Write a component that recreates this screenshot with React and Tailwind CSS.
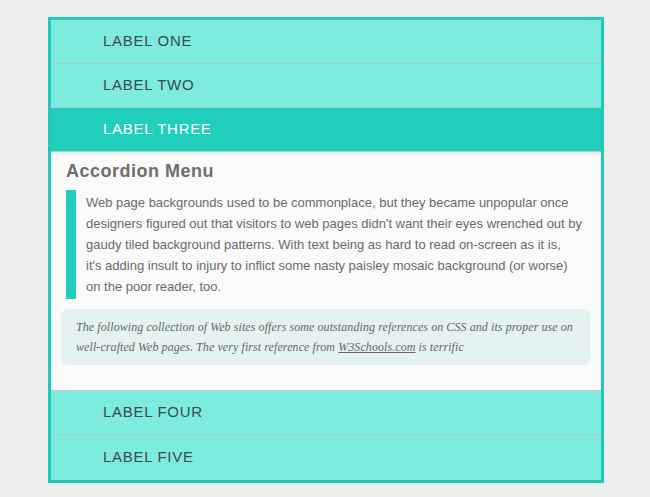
import React from 'react';

const LABELS_TOP = ['Label One', 'Label Two'];
const LABELS_BOTTOM = ['Label Four', 'Label Five'];

const PARAGRAPH = [
  'Web page backgrounds used to be commonplace, but they became unpopular once',
  "designers figured out that visitors to web pages didn't want their eyes wrenched out by",
  'gaudy tiled background patterns. With text being as hard to read on-screen as it is,',
  "it's adding insult to injury to inflict some nasty paisley mosaic background (or worse)",
  'on the poor reader, too.',
];

function Row({ label, active }) {
  return (
    <div
      className={
        'h-[44px] flex items-center pl-[52px] border-b border-[#a3cfca] uppercase text-[15px] tracking-[0.7px] ' +
        (active ? 'bg-[#21cdbb] text-white border-[#1fc3b2]' : 'bg-[#7eebdf] text-[#3d4a50]')
      }
    >
      {label}
    </div>
  );
}

export default function App() {
  return (
    <div
      className="w-[650px] h-[497px] bg-[#ededed] pt-[17px] pl-[48px]"
      style={{ fontFamily: '"Liberation Sans", Arial, sans-serif' }}
    >
      <div className="w-[556px] border-[3px] border-[#20cab8] bg-[#7eebdf]">
        {LABELS_TOP.map(l => <Row key={l} label={l} />)}
        <Row label="Label Three" active />

        {/* Open panel */}
        <div className="h-[239px] bg-[#fafafa] border-b border-[#c9c6ce] shadow-[inset_0_2px_3px_rgba(0,0,0,0.07)] pt-[8px]">
          <h2 className="ml-[15px] text-[18px] leading-[22px] font-bold text-[#6e6e6e] tracking-[0.5px]">
            Accordion Menu
          </h2>
          <div className="mt-[8px] ml-[15px] mr-[12px] border-l-[10px] border-[#21cdbb] pl-[10px] py-[2px]">
            <p className="text-[13px] leading-[21px] whitespace-nowrap text-[#6a6a6a]">
              {PARAGRAPH.map((line, i) => (
                <span key={i} className="block">{line}</span>
              ))}
            </p>
          </div>
          <div className="mt-[10px] ml-[10px] mr-[11px] rounded-[6px] bg-[#e4f3f2] pl-[15px] pr-[8px] py-[8px]">
            <p
              className="italic text-[12px] leading-[20px] tracking-[0.08px] text-[#676767]"
              style={{ fontFamily: '"Liberation Serif", "DejaVu Serif", serif' }}
            >
              The following collection of Web sites offers some outstanding references on CSS and its proper use on well-crafted Web pages. The very first reference from{' '}
              <a href="#" className="underline">W3Schools.com</a> is terrific
            </p>
          </div>
        </div>

        {LABELS_BOTTOM.map((l, i) => (
          <div
            key={l}
            className={
              'h-[44px] flex items-center pl-[52px] bg-[#7eebdf] text-[#3d4a50] uppercase text-[15px] tracking-[0.7px] ' +
              (i === 0 ? 'border-b border-[#b3c6c6]' : 'h-[45px]')
            }
          >
            {l}
          </div>
        ))}
      </div>
    </div>
  );
}
